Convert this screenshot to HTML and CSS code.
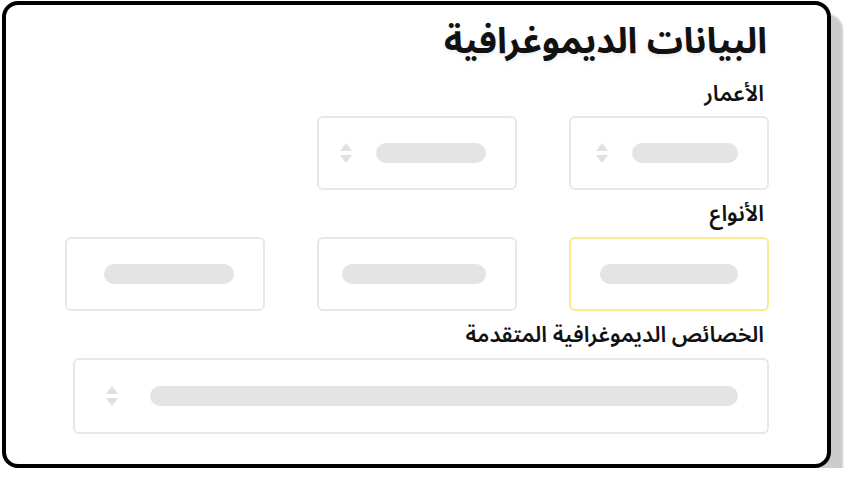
FILE: index.html
```html
<!DOCTYPE html>
<html lang="ar" dir="rtl">
  <head>
    <title>البيانات الديموغرافية</title>
    <meta charset="UTF-8">
    <link rel="stylesheet" href="styles.css">
  </head>
  <body>
    <section class="panel">
      <h1 class="panel-title">البيانات الديموغرافية</h1>

      <h2 class="group-label">الأعمار</h2>
      <div class="field-row">
        <div class="select">
          <span class="bar bar-a"></span>
          <svg class="sort" viewBox="0 0 12 22" width="12" height="22" aria-hidden="true">
            <path d="M6 1 L12 9 H0 Z" />
            <path d="M0 13 H12 L6 21 Z" />
          </svg>
        </div>
        <div class="select">
          <span class="bar bar-b"></span>
          <svg class="sort" viewBox="0 0 12 22" width="12" height="22" aria-hidden="true">
            <path d="M6 1 L12 9 H0 Z" />
            <path d="M0 13 H12 L6 21 Z" />
          </svg>
        </div>
      </div>

      <h2 class="group-label">الأنواع</h2>
      <div class="field-row">
        <div class="select is-active">
          <span class="bar bar-c"></span>
        </div>
        <div class="select">
          <span class="bar bar-d"></span>
        </div>
        <div class="select">
          <span class="bar bar-e"></span>
        </div>
      </div>

      <h2 class="group-label">الخصائص الديموغرافية المتقدمة</h2>
      <div class="select select-wide">
        <span class="bar bar-wide"></span>
        <svg class="sort" viewBox="0 0 12 22" width="12" height="22" aria-hidden="true">
          <path d="M6 1 L12 9 H0 Z" />
          <path d="M0 13 H12 L6 21 Z" />
        </svg>
      </div>
    </section>
  </body>
</html>
```

FILE: styles.css
```css
/* page */
body {
  background: #fff;
  font-family: "Noto Sans Arabic", "Noto Sans", "DejaVu Sans", sans-serif;
  margin: 0;
}

/* outlined card with hard drop shadow */
.panel {
  background: #fff;
  border: 4px solid #000;
  border-radius: 16px;
  box-shadow: 12px 13px 2px #cccccc;
  box-sizing: border-box;
  height: 467px;
  margin: 1px auto 0 2px;
  padding: 13px 58px 0 0;
  width: 829px;
}

.panel-title {
  color: #111;
  font-size: 36px;
  font-weight: 700;
  line-height: 48px;
  margin: 0 0 13px 0;
  padding-right: 2px;
  text-shadow: 0 2px 4px rgba(0, 0, 0, 0.08);
}

.group-label {
  color: #111;
  font-size: 22px;
  font-weight: 600;
  line-height: 30px;
  margin: 0 0 7px 0;
  padding-right: 5px;
}

/* select placeholders */
.field-row {
  display: grid;
  gap: 52px;
  grid-template-columns: repeat(3, 200px);
  margin-bottom: 9px;
}
.field-row + .group-label {
  margin-bottom: 8px;
}
.field-row + .group-label + .select-wide {
  margin-top: 0;
}

.select {
  align-items: center;
  background: #fff;
  border: 2px solid #e8e8e8;
  border-radius: 6px;
  box-sizing: border-box;
  display: flex;
  gap: 24px;
  height: 74px;
  padding: 0 29px 0 0;
}
.select.is-active {
  border-color: #fbe98c;
}
.select-wide {
  gap: 32px;
  height: 76px;
  width: 696px;
}

.bar {
  background: #e4e4e4;
  border-radius: 10px;
  display: block;
  height: 20px;
}
.bar-a { width: 106px; }
.bar-b { width: 110px; }
.bar-c { width: 138px; }
.bar-d { width: 144px; }
.bar-e { width: 130px; }
.bar-wide { width: 588px; }

.sort {
  fill: #e0e0e0;
  flex: none;
}
```
